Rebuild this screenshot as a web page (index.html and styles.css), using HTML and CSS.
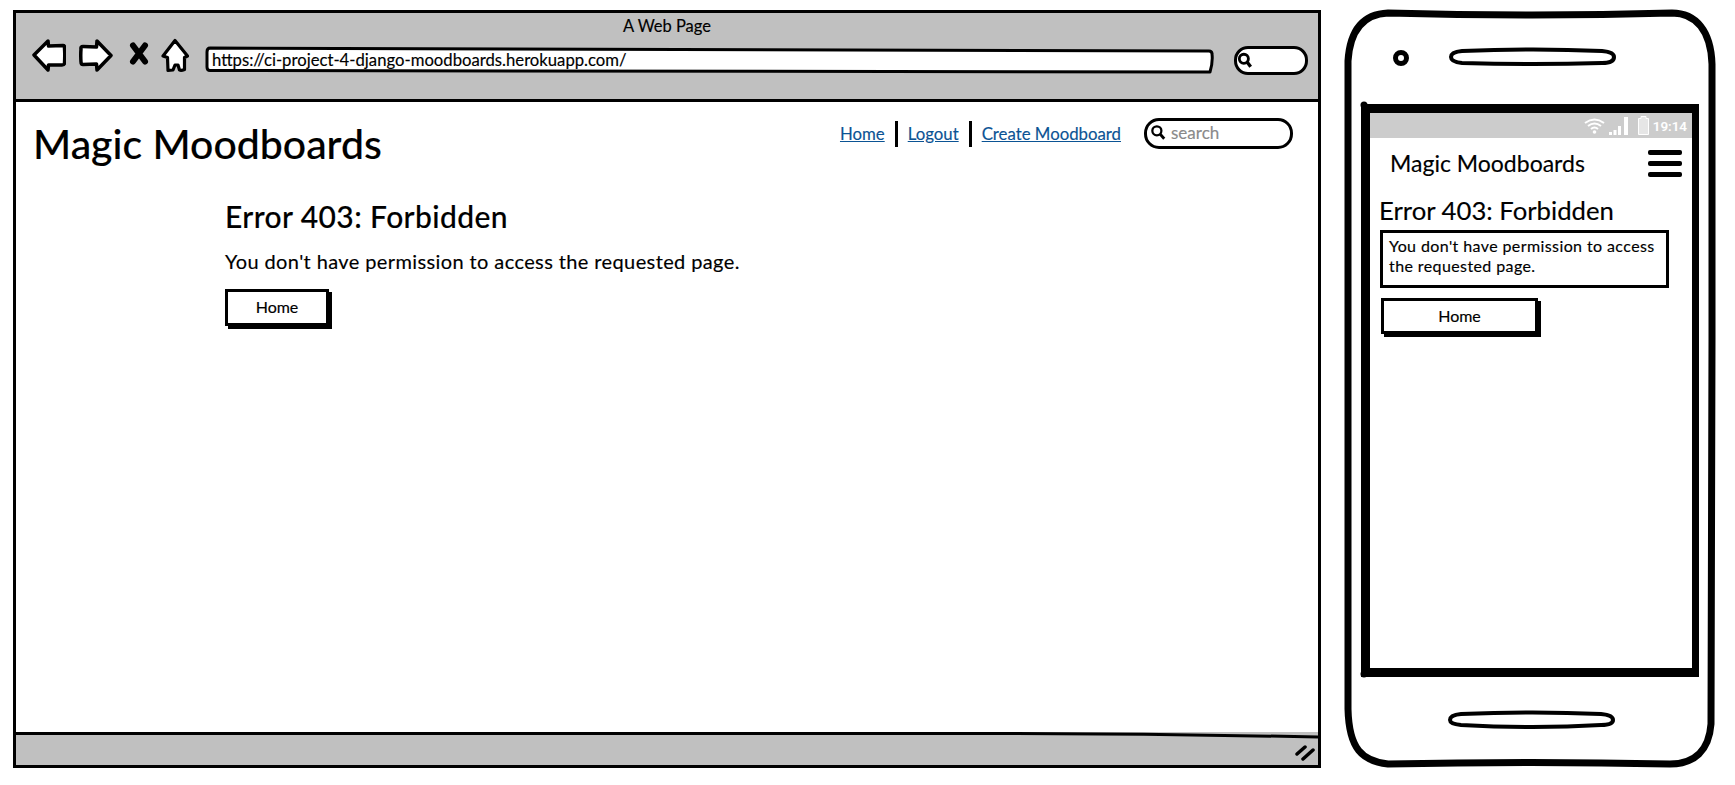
FILE: index.html
```html
<!DOCTYPE html>
<html lang="en">
<head>
  <meta charset="UTF-8" />
  <title>Magic Moodboards - Error 403</title>
  <link rel="stylesheet" href="styles.css">
</head>

<body>
  <div class="browser">
    <div class="toolbar">
      <div class="page-title">A Web Page</div>
      <div class="toolbar-row">
        <svg class="tool-icon" width="34" height="33" viewBox="0 0 34 33">
          <path d="M2 16 L16 2 L16.5 7 L31 6.5 Q33 6.5 32.5 9 Q33 16 32.5 24 Q32.5 26 30 26 L16.5 26 L16 31 Z" fill="#fff" stroke="#000" stroke-width="3.5" stroke-linejoin="round"/>
        </svg>
        <svg class="tool-icon forward" width="34" height="33" viewBox="0 0 34 33">
          <path d="M32 16.5 L18 2 L17.5 8 L4 7.5 Q1.5 7.5 2 10 Q1.5 16 2 23 Q2 25.5 4 25.5 L17.5 25 L18 31 Z" fill="#fff" stroke="#000" stroke-width="3.5" stroke-linejoin="round"/>
        </svg>
        <svg class="tool-icon stop" width="20" height="23" viewBox="0 0 20 23">
          <path d="M4 3.5 L16 19.5 M16 3.5 L4 19.5" fill="none" stroke="#000" stroke-width="6" stroke-linecap="round"/>
        </svg>
        <svg class="tool-icon home" width="28" height="35" viewBox="0 0 28 35">
          <path d="M14 2.5 L26.5 18 L23.5 19.5 L23.5 31.5 Q20 33 18.5 32 L17 27 L14 27 L12 32 L7 32.5 L6.5 19.5 L2 18 Z" fill="#fff" stroke="#000" stroke-width="3.2" stroke-linejoin="round"/>
        </svg>
        <div class="url-box">
          <svg class="url-outline" width="1010" height="29" viewBox="0 0 1010 29">
            <path d="M5 2 L1004 5 Q1007 5 1007 8 Q1008 16 1005 26 L5 24.5 Q2 24.5 2 21 L2 6 Q2 2 5 2 Z" fill="#fff" stroke="#000" stroke-width="3" stroke-linejoin="round"/>
          </svg>
          <span>https://ci-project-4-django-moodboards.herokuapp.com/</span>
        </div>
        <div class="toolbar-search">
          <svg width="16" height="17" viewBox="0 0 14 15">
            <circle cx="6" cy="6" r="4" fill="none" stroke="#000" stroke-width="2.5"/>
            <path d="M9 9 L12 13" stroke="#000" stroke-width="3"/>
          </svg>
        </div>
      </div>
    </div>

    <div class="content">
      <div class="site-header">
        <h1 class="site-title">Magic Moodboards</h1>
        <nav class="site-nav">
          <a href="#">Home</a>
          <span class="nav-sep"></span>
          <a href="#">Logout</a>
          <span class="nav-sep"></span>
          <a href="#">Create Moodboard</a>
        </nav>
        <div class="site-search">
          <svg width="16" height="17" viewBox="0 0 14 15">
            <circle cx="6" cy="6" r="4" fill="none" stroke="#000" stroke-width="2"/>
            <path d="M9 9 L12.5 13" stroke="#000" stroke-width="2.5"/>
          </svg>
          <span>search</span>
        </div>
      </div>
      <div class="error-block">
        <h2>Error 403: Forbidden</h2>
        <p>You don't have permission to access the requested page.</p>
        <button class="sketch-btn">Home</button>
      </div>
    </div>

    <div class="statusbar">
      <svg class="status-edge" width="1302" height="8" viewBox="0 0 1302 8">
        <path d="M0 1.5 L1000 1.5 Q1150 2 1302 5" fill="none" stroke="#000" stroke-width="3"/>
      </svg>
      <svg class="resize-grip" width="20" height="16" viewBox="0 0 20 16">
        <path d="M2 9 L10 2 M8 14 L18 5" fill="none" stroke="#000" stroke-width="3.5" stroke-linecap="round"/>
      </svg>
    </div>
  </div>

  <div class="phone">
    <svg class="phone-frame" width="372" height="759" viewBox="0 0 372 759">
      <path d="M44 4 Q190 8 328 4 C352 4 367 22 368 55 L368 330 L367 715 C365 742 350 755 326 755 Q190 752 44 755 C18 752 5 740 4 700 L4 340 L4 52 C6 20 20 5 44 4 Z" fill="none" stroke="#000" stroke-width="7"/>
      <circle cx="57" cy="49" r="5.5" fill="none" stroke="#000" stroke-width="5"/>
      <path d="M118 42 Q190 39 258 42 Q270 43 270 48 Q270 54 258 54 Q190 56 118 54 Q107 53 107 48 Q107 43 118 42 Z" fill="none" stroke="#000" stroke-width="4"/>
      <path d="M117 705 Q190 702 257 705 Q269 706 269 711 Q269 716 257 716 Q190 720 117 716 Q106 715 106 711 Q106 706 117 705 Z" fill="none" stroke="#000" stroke-width="4"/>
      <circle cx="20" cy="96" r="3.5"/>
      <circle cx="20" cy="665" r="3.5"/>
    </svg>
    <div class="screen">
      <div class="android-bar">
        <svg width="21" height="16" viewBox="0 0 21 16">
          <path d="M1 5 Q10.5 -2 20 5 M4 8 Q10.5 3 17 8 M7 11 Q10.5 8 14 11" fill="none" stroke="#fff" stroke-width="2"/>
          <circle cx="10.5" cy="14" r="1.8" fill="#fff"/>
        </svg>
        <svg width="20" height="18" viewBox="0 0 20 18">
          <path d="M0 15h3v3H0z M4.5 13h3v5h-3z M9 9h3v9H9z M15 0h4v18h-4z" fill="#fff"/>
        </svg>
        <svg class="battery" width="11" height="19" viewBox="0 0 11 19">
          <path d="M3 0.5h5v2h2.5v16H0.5v-16H3z" fill="#e6e6e6" stroke="#fff"/>
        </svg>
        <span class="clock">19:14</span>
      </div>
      <div class="phone-header">
        <span class="phone-title">Magic Moodboards</span>
        <div class="hamburger">
          <div></div>
          <div></div>
          <div></div>
        </div>
      </div>
      <div class="phone-body">
        <h2>Error 403: Forbidden</h2>
        <p>You don't have permission to access the requested page.</p>
        <button class="sketch-btn">Home</button>
      </div>
    </div>
  </div>
</body>
</html>
```

FILE: styles.css
```css
* {
  margin: 0;
  padding: 0;
  box-sizing: border-box;
}

body {
  font-family: 'Lato', sans-serif;
  background: white;
  color: black;
  display: flex;
  align-items: flex-start;
  height: 785px;
  padding: 10px 0 0 13px;
  overflow: hidden;
  -webkit-text-stroke: 0.15px;
}

/* desktop browser wireframe */
.browser {
  width: 1308px;
  height: 758px;
  border: 3px solid black;
  display: flex;
  flex-direction: column;
}
.toolbar {
  height: 89px;
  background: #c0c0c0;
  border-bottom: 3px solid black;
  padding-top: 3px;
}
.page-title {
  text-align: center;
  font-size: 16.5px;
  line-height: 20px;
}
.toolbar-row {
  display: flex;
  align-items: flex-start;
  padding: 2px 10px 0 16px;
}
.tool-icon {
  flex: none;
  margin-top: 1px;
}
.forward {
  margin-left: 13px;
}
.stop {
  margin-left: 16px;
  margin-top: 4px;
}
.home {
  margin-left: 12px;
  margin-top: 0;
}
.url-box {
  position: relative;
  flex: 1;
  height: 29px;
  margin: 8px 0 0 16px;
  padding-left: 7px;
  font-size: 16.7px;
  line-height: 29px;
}
.url-outline {
  position: absolute;
  top: 0;
  left: 0;
}
.url-box span {
  position: relative;
}
.toolbar-search {
  width: 74px;
  height: 29px;
  margin: 8px 0 0 20px;
  background: white;
  border: 3px solid black;
  border-radius: 14px;
  display: flex;
  align-items: center;
}

/* page content */
.content {
  flex: 1;
}
.site-header {
  display: flex;
  align-items: flex-start;
  padding: 16px 25px 0 17px;
}
.site-title {
  flex: 1;
  font-size: 41px;
  line-height: 40px;
  font-weight: 500;
  margin-top: 6px;
}
.site-nav {
  display: flex;
  align-items: center;
  height: 31px;
  font-size: 16.8px;
  margin-right: 23px;
}
.site-nav a {
  color: #0b5394;
}
.nav-sep {
  width: 3px;
  height: 26px;
  background: black;
  margin: 0 10px;
}
.site-search {
  width: 149px;
  height: 31px;
  background: white;
  border: 3px solid black;
  border-radius: 15px;
  padding: 0 0 3px 3px;
  display: flex;
  align-items: center;
  gap: 5px;
  font-size: 17px;
  color: #8a8a8a;
}
.error-block {
  margin: 35px 0 0 209px;
}
.error-block h2 {
  font-size: 30px;
  line-height: 34px;
  font-weight: 500;
  letter-spacing: 0.4px;
}
.error-block p {
  font-size: 20px;
  line-height: 24px;
  letter-spacing: 0.39px;
  margin-top: 16px;
}
.sketch-btn {
  display: block;
  width: 104px;
  height: 37px;
  margin-top: 16px;
  padding-bottom: 2px;
  background: white;
  color: black;
  border: 3px solid black;
  box-shadow: 3px 3px 0 black;
  font-family: inherit;
  font-size: 16px;
  -webkit-text-stroke: inherit;
}
.statusbar {
  position: relative;
  height: 33px;
  background: #c0c0c0;
}
.status-edge {
  position: absolute;
  top: 0;
  left: 0;
}
.resize-grip {
  position: absolute;
  top: 13px;
  right: 3px;
}

/* phone wireframe */
.phone {
  position: relative;
  width: 372px;
  height: 759px;
  margin: -1px 0 0 23px;
  padding: 95px 17px 0;
}
.phone-frame {
  position: absolute;
  top: 0;
  left: 0;
}
.screen {
  width: 338px;
  height: 573px;
  border: solid black;
  border-width: 9px 7px 9px 9px;
}
.android-bar {
  height: 25px;
  background: #cccccc;
  display: flex;
  align-items: center;
  justify-content: flex-end;
  padding-right: 5px;
  gap: 4px;
}
.battery {
  margin-left: 5px;
}
.clock {
  font-family: 'Roboto', sans-serif;
  font-size: 13.5px;
  font-weight: 500;
  color: white;
}
.phone-header {
  display: flex;
  align-items: center;
  justify-content: space-between;
  padding: 11px 10px 0 20px;
}
.phone-title {
  font-size: 23px;
}
.hamburger {
  display: flex;
  flex-direction: column;
  gap: 6px;
}
.hamburger div {
  width: 34px;
  height: 5px;
  border-radius: 2px;
  background: black;
}
.phone-body {
  padding: 18px 0 0 9px;
}
.phone-body h2 {
  font-size: 25.7px;
  line-height: 30px;
  font-weight: 400;
}
.phone-body p {
  width: 289px;
  height: 58px;
  margin: 5px 0 0 1px;
  padding: 3px 6px;
  border: 3px solid black;
  font-size: 16px;
  line-height: 20px;
  letter-spacing: 0.4px;
}
.phone-body .sketch-btn {
  width: 157px;
  height: 36px;
  margin: 10px 0 0 2px;
}
```
